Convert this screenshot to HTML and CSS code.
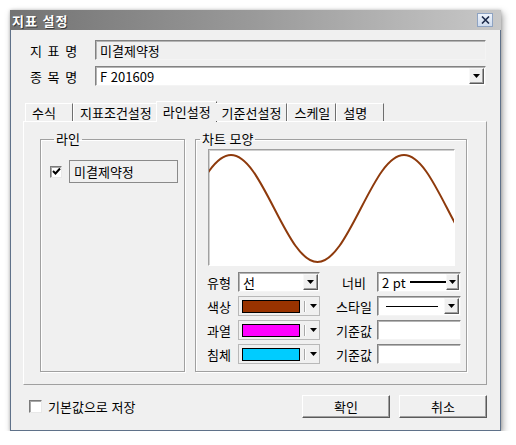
FILE: index.html
```html
<!DOCTYPE html>
<html lang="ko">
<head>
    <meta charset="UTF-8">
    <title>지표 설정</title>
    <link rel="stylesheet" href="styles.css">
</head>
<body>
    <div class="window">
        <div class="titlebar">
            <span class="title">지표 설정</span>
            <span class="close-btn">
                <svg width="9" height="8" viewBox="0 0 9 8"><path d="M1 0.5 L8 7.5 M8 0.5 L1 7.5" stroke="#1c2a4a" stroke-width="1.6"/></svg>
            </span>
        </div>

        <div class="content">
            <div class="field-row">
                <span class="field-label">지 표 명</span>
                <div class="textbox readonly">미결제약정</div>
            </div>
            <div class="field-row">
                <span class="field-label">종 목 명</span>
                <div class="combo combo-wide">
                    <span class="combo-text">F 201609</span>
                    <span class="drop-btn"><svg width="7" height="4" viewBox="0 0 7 4"><polygon points="0,0 7,0 3.5,4" fill="#000"/></svg></span>
                </div>
            </div>

            <div class="tabs">
                <span class="tab">수식</span>
                <span class="tab">지표조건설정</span>
                <span class="tab active">라인설정</span>
                <span class="tab">기준선설정</span>
                <span class="tab">스케일</span>
                <span class="tab">설명</span>
            </div>

            <div class="tab-panel">
                <fieldset class="group group-line">
                    <legend>라인</legend>
                    <div class="line-item">
                        <span class="check checked">
                            <svg width="9" height="9" viewBox="0 0 9 9"><polyline points="1,4 3.5,6.5 8,1.5" fill="none" stroke="#000" stroke-width="2"/></svg>
                        </span>
                        <div class="line-name">미결제약정</div>
                    </div>
                </fieldset>

                <fieldset class="group group-chart">
                    <legend>차트 모양</legend>
                    <div class="chart">
                        <svg width="245" height="115" viewBox="0 0 245 115">
                            <path d="M-21.25 58.5 C-6.79 30.41, 6.43 5, 22 5 C37.57 5, 50.79 30.41, 65.25 58.5 C79.71 86.59, 92.93 112, 108.5 112 C124.07 112, 137.29 86.59, 151.75 58.5 C166.21 30.41, 179.43 5, 195 5 C210.57 5, 223.79 30.41, 238.25 58.5 C252.71 86.59, 265.93 112, 281.5 112" fill="none" stroke="#8e3a0c" stroke-width="2"/>
                        </svg>
                    </div>

                    <div class="props">
                        <div class="prop-row">
                            <span class="prop-label">유형</span>
                            <div class="combo combo-small">
                                <span class="combo-text">선</span>
                                <span class="drop-btn"><svg width="7" height="4" viewBox="0 0 7 4"><polygon points="0,0 7,0 3.5,4" fill="#000"/></svg></span>
                            </div>
                            <span class="prop-label right">너비</span>
                            <div class="combo combo-small combo-right">
                                <span class="combo-text">2 pt</span>
                                <span class="pen thick"></span>
                                <span class="drop-btn"><svg width="7" height="4" viewBox="0 0 7 4"><polygon points="0,0 7,0 3.5,4" fill="#000"/></svg></span>
                            </div>
                        </div>
                        <div class="prop-row">
                            <span class="prop-label">색상</span>
                            <div class="color-combo">
                                <span class="swatch brown"></span>
                                <span class="sep"></span>
                                <svg width="7" height="4" viewBox="0 0 7 4"><polygon points="0,0 7,0 3.5,4" fill="#000"/></svg>
                            </div>
                            <span class="prop-label right">스타일</span>
                            <div class="combo combo-small combo-right">
                                <span class="pen thin"></span>
                                <span class="drop-btn"><svg width="7" height="4" viewBox="0 0 7 4"><polygon points="0,0 7,0 3.5,4" fill="#000"/></svg></span>
                            </div>
                        </div>
                        <div class="prop-row">
                            <span class="prop-label">과열</span>
                            <div class="color-combo">
                                <span class="swatch magenta"></span>
                                <span class="sep"></span>
                                <svg width="7" height="4" viewBox="0 0 7 4"><polygon points="0,0 7,0 3.5,4" fill="#000"/></svg>
                            </div>
                            <span class="prop-label right">기준값</span>
                            <div class="textbox value-box"></div>
                        </div>
                        <div class="prop-row">
                            <span class="prop-label">침체</span>
                            <div class="color-combo">
                                <span class="swatch cyan"></span>
                                <span class="sep"></span>
                                <svg width="7" height="4" viewBox="0 0 7 4"><polygon points="0,0 7,0 3.5,4" fill="#000"/></svg>
                            </div>
                            <span class="prop-label right">기준값</span>
                            <div class="textbox value-box"></div>
                        </div>
                    </div>
                </fieldset>
            </div>

            <div class="footer">
                <span class="check"></span>
                <span class="footer-label">기본값으로 저장</span>
                <div class="buttons">
                    <button type="button" class="btn">확인</button>
                    <button type="button" class="btn">취소</button>
                </div>
            </div>
        </div>
    </div>
</body>
</html>
```

FILE: styles.css
```css
* {
    box-sizing: border-box;
}
body {
    margin: 0;
    background: #fff;
    font-family: "Noto Sans CJK KR", "Liberation Sans", sans-serif;
    font-size: 13px;
    color: #000;
}

/* dialog frame */
.window {
    margin: 10px 0 0 10px;
    width: 491px;
    height: 421px;
    background: #f0f0f0;
    border: 1px solid #5f7189;
    border-top: none;
    box-shadow: 2px 3px 7px rgba(0, 0, 0, 0.35), 0 0 3px rgba(0, 0, 0, 0.2);
}
.titlebar {
    height: 20px;
    margin: 0 -1px;
    display: flex;
    align-items: center;
    padding: 0 8px 0 2px;
    background: linear-gradient(to right, #737373, #9a9a9a 50%, #c8c8c8);
}
.title {
    color: #fff;
    font-weight: bold;
    letter-spacing: 1px;
    text-shadow: 1px 1px 0 #3a3a3a;
}
.close-btn {
    margin-left: auto;
    width: 16px;
    height: 14px;
    display: flex;
    align-items: center;
    justify-content: center;
    background: linear-gradient(#eef3fb, #cfdcef);
    border: 1px solid #8ea3c2;
}

.content {
    padding: 0 13px 0 12px;
}

/* top fields */
.field-row {
    display: flex;
    align-items: center;
    height: 20px;
    padding-left: 7px;
    margin-right: 1px;
}
.field-row:first-child {
    margin-top: 10px;
}
.field-row + .field-row {
    margin-top: 6px;
}
.field-label {
    width: 65px;
    letter-spacing: 1px;
}
.textbox {
    height: 20px;
    background: #fff;
    border: 1px solid;
    border-color: #828282 #f4f4f4 #f4f4f4 #828282;
    box-shadow: inset 1px 1px #b4b4b4;
    padding-left: 4px;
    display: flex;
    align-items: center;
}
.field-row .textbox {
    flex: 1;
}
.textbox.readonly {
    background: #f0f0f0;
}

.combo {
    height: 20px;
    display: flex;
    align-items: center;
    background: #fff;
    border: 1px solid;
    border-color: #828282 #f4f4f4 #f4f4f4 #828282;
    box-shadow: inset 1px 1px #b4b4b4;
    padding: 0 1px 0 4px;
}
.combo-wide {
    flex: 1;
}
.combo-text {
    flex: none;
}
.drop-btn {
    margin-left: auto;
    width: 15px;
    height: 16px;
    display: flex;
    align-items: center;
    justify-content: center;
    background: #f0f0f0;
    border: 1px solid;
    border-color: #f8f8f8 #5a5a5a #5a5a5a #f8f8f8;
    box-shadow: inset -1px -1px #a0a0a0;
}

/* tabs */
.tabs {
    margin-top: 15px;
    height: 20px;
    display: flex;
    align-items: flex-end;
    padding-left: 2px;
    position: relative;
    z-index: 1;
}
.tab {
    height: 18px;
    min-width: 48px;
    padding: 0 5px 0 6px;
    display: flex;
    align-items: center;
    border-top: 1px solid #fff;
    border-left: 1px solid #fff;
    border-right: 1px solid #6e6e6e;
    background: #f0f0f0;
}
.tab.active {
    height: 21px;
    margin: 0 -1px -1px -2px;
    padding: 0 5px 2px 6px;
    border-right-color: #5a5a5a;
}
.tab.active + .tab {
    border-left: none;
}

.tab-panel {
    height: 264px;
    display: flex;
    gap: 10px;
    padding: 10px 0 0 16px;
    border: 1px solid;
    border-color: #fff #a0a0a0 #a0a0a0 #fff;
}

/* group boxes */
.group {
    margin: 0;
    padding: 0;
    min-width: 0;
    height: 240px;
    border: 1px solid #a0a0a0;
    box-shadow: inset 1px 1px #fff, 1px 1px #fff;
}
.group legend {
    padding: 0 2px;
    line-height: 14px;
}
.group-line {
    width: 145px;
    padding-left: 9px;
}
.group-line legend {
    margin-left: 4px;
}
.group-chart {
    width: 272px;
}
.group-chart legend {
    margin-left: 4px;
}

.line-item {
    margin-top: 14px;
    display: flex;
    align-items: center;
    gap: 7px;
}
.check {
    width: 12px;
    height: 12px;
    background: #fff;
    border: 1px solid;
    border-color: #7a7a7a #e8e8e8 #e8e8e8 #7a7a7a;
    box-shadow: inset 1px 1px #a8a8a8;
    display: flex;
    align-items: center;
    justify-content: center;
    flex: none;
}
.line-name {
    width: 109px;
    height: 23px;
    border: 1px solid #8a8a8a;
    background: #f0f0f0;
    padding-left: 4px;
    display: flex;
    align-items: center;
}

/* chart preview */
.chart {
    margin: 3px 0 0 12px;
    width: 247px;
    height: 117px;
    background: #fff;
    border: 1px solid;
    border-color: #a0a0a0 #fff #fff #a0a0a0;
    box-shadow: inset 1px 1px #d0d0d0;
    overflow: hidden;
}
.chart svg {
    display: block;
}

/* property rows */
.props {
    margin-top: 6px;
    padding-left: 11px;
    display: flex;
    flex-direction: column;
    gap: 4px;
}
.prop-row {
    height: 20px;
    display: flex;
    align-items: center;
}
.prop-label {
    width: 31px;
    flex: none;
}
.prop-label.right {
    width: 40px;
    margin: 0 3px 0 14px;
    text-align: center;
}
.combo-small {
    width: 82px;
}
.combo-right {
    width: 84px;
}
.pen {
    display: block;
    flex: none;
    background: #000;
}
.pen.thick {
    width: 36px;
    height: 2px;
    margin-left: 4px;
}
.pen.thin {
    width: 52px;
    height: 1px;
    margin-left: 4px;
}
.value-box {
    width: 84px;
}

.color-combo {
    width: 82px;
    height: 20px;
    display: flex;
    align-items: center;
    padding: 0 0 0 3px;
    border: 1px solid #b8b8b8;
    background: #f0f0f0;
}
.swatch {
    width: 58px;
    height: 13px;
    border: 1px solid #000;
}
.swatch.brown {
    background: #993300;
}
.swatch.magenta {
    background: #ff00ff;
}
.swatch.cyan {
    background: #00ccff;
}
.sep {
    width: 1px;
    height: 11px;
    margin: 0 5px 0 4px;
    background: #a8a8a8;
    box-shadow: 1px 0 #fff;
}

/* bottom row */
.footer {
    margin-top: 10px;
    height: 23px;
    display: flex;
    align-items: center;
    padding-left: 6px;
}
.footer .check {
    width: 13px;
    height: 13px;
}
.footer-label {
    margin-left: 6px;
}
.buttons {
    margin-left: auto;
    display: flex;
    gap: 9px;
}
.btn {
    width: 88px;
    height: 23px;
    font-family: inherit;
    font-size: 13px;
    padding: 0;
    background: #f0f0f0;
    border: 1px solid;
    border-color: #fff #5a5a5a #5a5a5a #fff;
    box-shadow: inset -1px -1px #a0a0a0;
}
```
